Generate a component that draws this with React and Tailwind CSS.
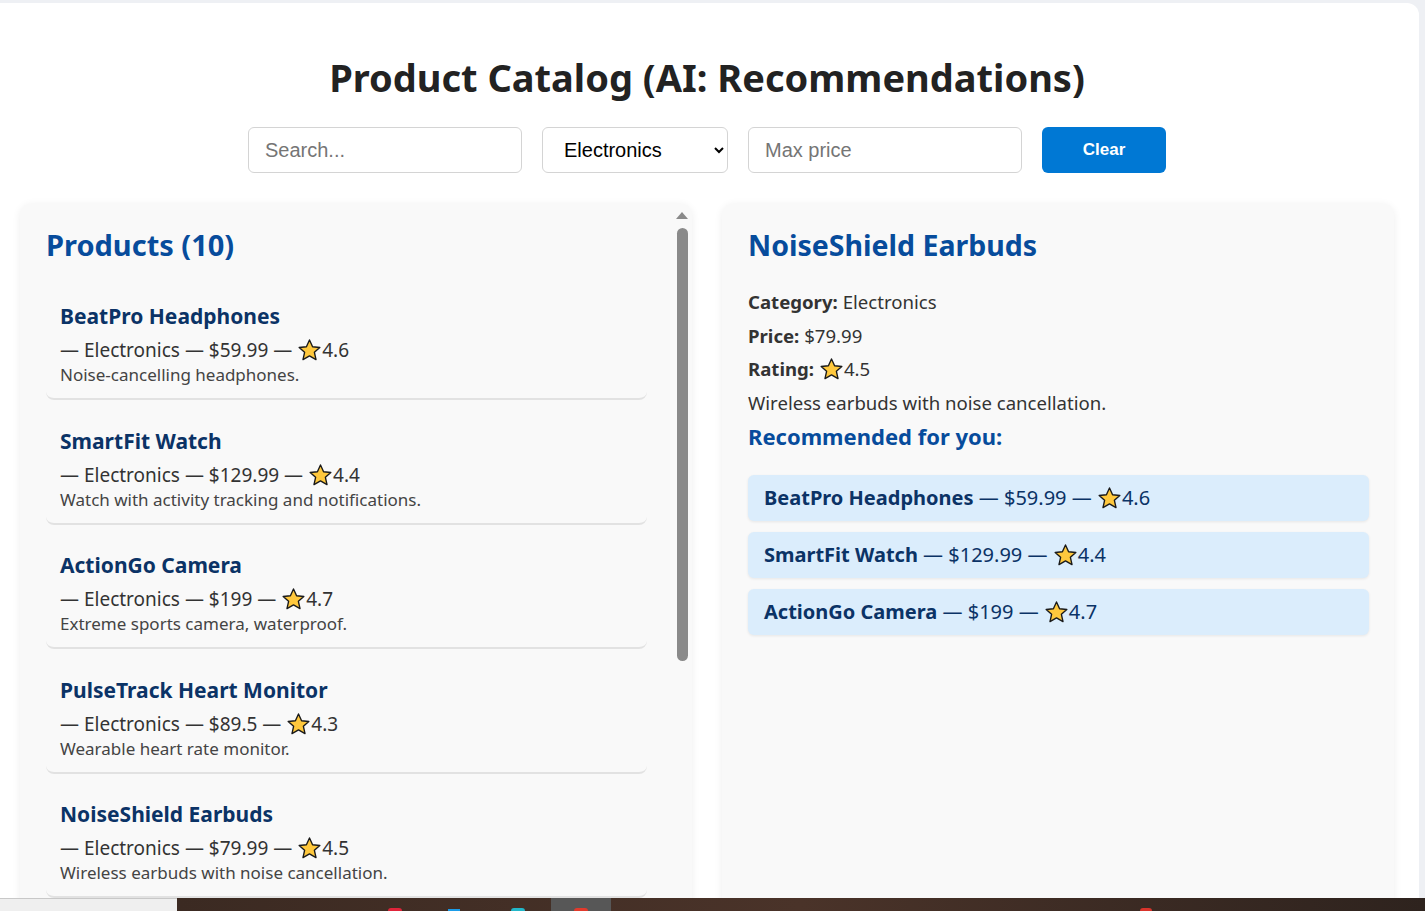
import React from "react";

const products = [
    { name: "BeatPro Headphones", category: "Electronics", price: "59.99", rating: "4.6", desc: "Noise-cancelling headphones." },
    { name: "SmartFit Watch", category: "Electronics", price: "129.99", rating: "4.4", desc: "Watch with activity tracking and notifications." },
    { name: "ActionGo Camera", category: "Electronics", price: "199", rating: "4.7", desc: "Extreme sports camera, waterproof." },
    { name: "PulseTrack Heart Monitor", category: "Electronics", price: "89.5", rating: "4.3", desc: "Wearable heart rate monitor." },
    { name: "NoiseShield Earbuds", category: "Electronics", price: "79.99", rating: "4.5", desc: "Wireless earbuds with noise cancellation." },
];

const recommended = products.slice(0, 3);

// star emoji drawn as svg, no emoji font in the sandbox
const Star = () => (
    <svg width="23" height="22" viewBox="1.2 1.4 21.6 20.4" className="mx-[1px] inline-block align-[-4px]">
        <path
            d="M12 2.2l2.9 6.3 6.8.7-5.1 4.6 1.5 6.8L12 17.1l-6.1 3.5 1.5-6.8-5.1-4.6 6.8-.7z"
            fill="#ffc83d"
            stroke="#1a1a1a"
            strokeWidth="1.3"
            strokeLinejoin="round"
        />
    </svg>
);

const ProductItem = ({ p }) => (
    <li className="mb-[10.5px] rounded-lg border-b-2 border-[#e2e2e2] px-[14px] pt-[16px] pb-[11px]">
        <div className="text-[21px] font-bold leading-[28px] text-[#0b3366]">{p.name}</div>
        <div className="mt-[7px] text-[19px] leading-[26px] text-[#333]">
            — {p.category} — ${p.price} — <Star />{p.rating}
        </div>
        <div className="text-[17px] leading-[24px] text-[#444]">{p.desc}</div>
    </li>
);

export default function App() {
    const selected = products[4];

    return (
        <div className="h-screen w-full overflow-hidden bg-[#eef0f4] font-['Noto_Sans',sans-serif]">
            <div className="h-[898px] overflow-hidden pt-[3px]">
                <div className="h-full w-[1419px] rounded-tr-xl bg-white pl-[20px] pr-[25px] pt-[48px]">
                    <h1 className="text-center text-[38px] font-bold leading-[52px] text-[#222]">
                        Product Catalog (AI: Recommendations)
                    </h1>

                    <div className="mt-[24px] flex justify-center gap-[20px] font-['Liberation_Sans',Arial,sans-serif] text-[20px]">
                        <input
                            type="text"
                            placeholder="Search..."
                            className="h-[46px] w-[274px] rounded-md border border-[#d4d4d4] bg-white px-[16px] placeholder:text-[#757575]"
                        />
                        <select
                            defaultValue="Electronics"
                            className="h-[46px] w-[186px] rounded-md border border-[#d4d4d4] bg-white pl-[17px] pr-[8px] text-black"
                        >
                            <option>All categories</option>
                            <option>Electronics</option>
                        </select>
                        <input
                            type="text"
                            placeholder="Max price"
                            className="h-[46px] w-[274px] rounded-md border border-[#d4d4d4] bg-white px-[16px] placeholder:text-[#757575]"
                        />
                        <button className="h-[46px] w-[124px] rounded-md bg-[#0078d4] text-[17px] font-bold text-white">
                            Clear
                        </button>
                    </div>

                    <div className="mt-[30px] flex gap-[30px]">
                        <div className="flex h-[760px] w-[672px] shrink-0 overflow-hidden rounded-xl bg-[#f9f9f9] shadow-[0_2px_8px_rgba(0,0,0,0.07)]">
                            <div className="min-w-0 flex-1 pl-[26px] pr-[30px] pt-[22px]">
                                <h2 className="mb-[21px] text-[29px] font-bold leading-[40px] text-[#074c9c]">
                                    Products (10)
                                </h2>
                                <ul>
                                    {products.map((p) => (
                                        <ProductItem key={p.name} p={p} />
                                    ))}
                                </ul>
                            </div>
                            <div className="flex w-[15px] flex-col items-start pt-[9px]">
                                <div className="ml-[-1px] h-0 w-0 border-x-[6.5px] border-b-[7px] border-x-transparent border-b-[#8a8a8a]" />
                                <div className="mt-[9px] h-[433px] w-[11px] rounded-full bg-[#8a8a8a]" />
                            </div>
                        </div>

                        <div className="h-[760px] w-[672px] shrink-0 rounded-xl bg-[#f9f9f9] px-[26px] pt-[22px] shadow-[0_2px_8px_rgba(0,0,0,0.07)]">
                            <h2 className="text-[28.5px] font-bold leading-[40px] text-[#074c9c]">{selected.name}</h2>
                            <div className="mt-[20px] text-[18.6px] leading-[33.5px] text-[#333]">
                                <p><span className="font-bold">Category:</span> {selected.category}</p>
                                <p><span className="font-bold">Price:</span> ${selected.price}</p>
                                <p><span className="font-bold">Rating:</span> <Star />{selected.rating}</p>
                                <p>{selected.desc}</p>
                            </div>
                            <h3 className="mt-[1px] text-[22px] font-bold leading-[32px] text-[#074c9c]">
                                Recommended for you:
                            </h3>
                            <ul className="mr-[-1px] mt-[23px] flex flex-col gap-[11px]">
                                {recommended.map((p) => (
                                    <li
                                        key={p.name}
                                        className="flex h-[46px] items-center rounded-md bg-[#dbedfc] px-[16px] text-[20px] text-[#0b3366] shadow-[0_1px_3px_rgba(0,0,0,0.08)]"
                                    >
                                        <span>
                                            <span className="font-bold">{p.name}</span> — ${p.price} — <Star />{p.rating}
                                        </span>
                                    </li>
                                ))}
                            </ul>
                        </div>
                    </div>
                </div>
            </div>

            <div className="flex h-[13px]">
                <div className="w-[177px] border-t border-[#c8c8c8] bg-[#efefef]" />
                <div className="flex flex-1 items-end bg-gradient-to-r from-[#3b2a22] via-[#4a3329] to-[#2e231e]">
                    <div className="ml-[211px] h-[3px] w-[14px] rounded-t-full bg-[#e0243a]" />
                    <div className="ml-[46px] h-[2px] w-[12px] bg-[#1b9ce8]" />
                    <div className="ml-[51px] h-[3px] w-[14px] rounded-t-full bg-[#22b7c9]" />
                    <div className="ml-[26px] flex h-full w-[60px] items-end justify-center bg-[#575757]">
                        <div className="h-[3px] w-[14px] rounded-t-full bg-[#e23a2c]" />
                    </div>
                    <div className="ml-[529px] h-[3px] w-[12px] rounded-t-full bg-[#d9342b]" />
                </div>
            </div>
        </div>
    );
}
